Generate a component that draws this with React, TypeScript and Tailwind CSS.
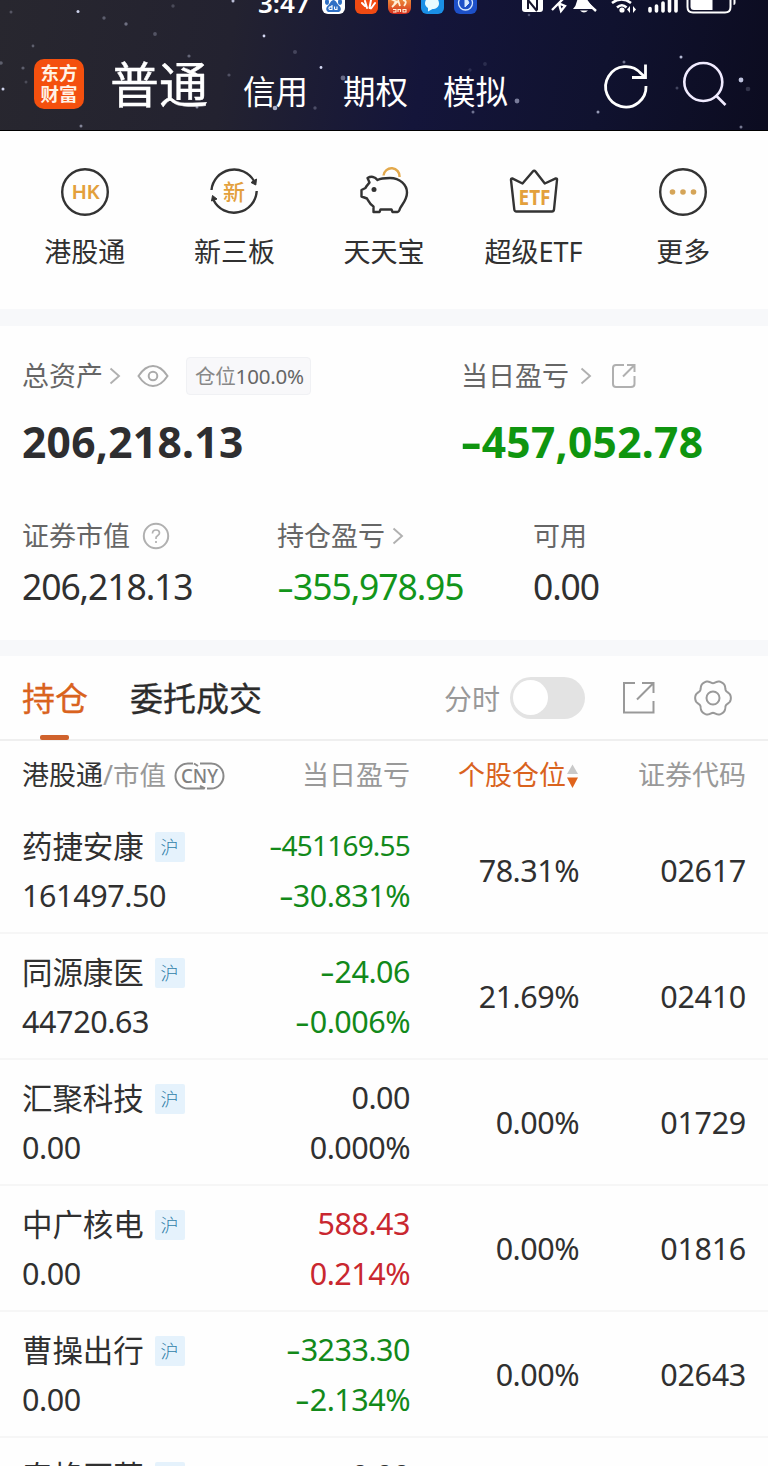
import type { ReactNode } from "react";

const FONT = "font-['Noto_Sans','Noto_Sans_CJK_SC',sans-serif]";

const STARS: [number, number, number, number][] = [
  [11, 12, 1.5, 0.25], [78, 11.5, 1.5, 0.9], [104, 18, 1.7, 0.3], [126, 24, 1.7, 0.4],
  [155, 34, 1.9, 0.25], [33, 46, 1.4, 0.3], [1, 63, 1.8, 0.3], [23, 68, 1.6, 0.3],
  [3, 89, 1.5, 0.9], [26, 82, 1.5, 0.2], [189, 56, 1.6, 0.35], [229, 75, 1.6, 0.25],
  [264, 36, 1.4, 0.95], [295, 52, 2, 0.2], [321, 67.5, 1.4, 0.95], [343, 78, 2.4, 0.4],
  [275, 108, 2.3, 0.75], [315, 108, 1.7, 0.25], [81, 126, 1.5, 0.5], [233, 1, 1.5, 0.8],
  [173, 6, 1.7, 0.2], [517, 101, 2.4, 0.5], [473, 112, 1.5, 0.45], [598, 112, 1.5, 0.65],
  [681, 57, 1.5, 0.8], [741, 80, 2.4, 0.85], [748, 89, 2.3, 0.18], [741, 127, 1.5, 0.5],
  [485, 64, 1.9, 0.12], [470, 70, 1.7, 0.12], [529, 15, 1.3, 0.3], [677, 88, 1.5, 0.25],
  [624, 62, 1.5, 0.45], [197, 107, 1.5, 0.55],
];

function Chevron() {
  return (
    <svg width="12" height="18" viewBox="0 0 12 18" fill="none" stroke="#b0b0b0" strokeWidth="1.9">
      <path d="M1.5 1.5 10 9 1.5 16.5" />
    </svg>
  );
}

function StatusBar() {
  return (
    <div className="relative flex h-[14px] items-end overflow-hidden pl-[258px]">
      <span className="-mb-[2px] h-[26px] w-[64px] text-[26px] leading-[26px] font-semibold text-white">3:47</span>
      <div className="flex gap-[10px]">
        <span className="flex h-[23px] w-[23px] items-end justify-center rounded-[6px] bg-white">
          <svg width="19" height="20" viewBox="0 0 19 20" fill="#2f6fc4">
            <ellipse cx="3" cy="8" rx="2" ry="2.8" />
            <ellipse cx="16" cy="8" rx="2" ry="2.8" />
            <path d="M9.500 6C7 6 6 10 3.500 12C1 14.500 2.500 18.500 6 18H13C17 18.500 18 14.500 15.500 12C13 10 12 6 9.500 6Z" />
            <path d="M8 11v4.500H6.200a1.300 1.300 0 0 1 0-2.600H8M10.500 12.500v2q0 1 1 1h1.500v-3" stroke="#fff" strokeWidth="1.100" fill="none" />
          </svg>
        </span>
        <span className="flex h-[23px] w-[23px] items-end justify-center rounded-[6px] bg-[#f04a12]">
          <svg width="19" height="20" viewBox="0 0 19 20" fill="none" stroke="#fff" strokeLinecap="round" strokeWidth="2">
            <path d="M8 12 5 9M10 14 8 7M12.500 14 14 6M14 14.500 18 9" />
          </svg>
        </span>
        <span className="flex h-[23px] w-[23px] flex-col items-center justify-end rounded-[6px] bg-linear-to-b from-[#f5b64a] to-[#d4281e]">
          <svg width="21" height="20" viewBox="0 0 21 20" fill="none" stroke="#fff0d8">
            <path d="M2 5 8 8 3 13M9 6 11 12M14 6q5 1 1 6M5 10l3-3" strokeWidth="1.800" />
            <path d="M4 15.500h3v2.500H4M9 18v-2.500h2.500V18M14 15.500h3v2.500h-3z" strokeWidth="1.100" />
          </svg>
        </span>
        <span className="flex h-[23px] w-[23px] items-end justify-center rounded-[6px] bg-[#1a8fe6]">
          <svg width="19" height="21" viewBox="0 0 19 21" fill="#e9fbff">
            <path d="M9 4c5 0 7 3 7 6.500S13 16 9.500 16L5 18.500V15C3 13.500 2 12 2 10.500 2 7 4 4 9 4Z" />
          </svg>
        </span>
        <span className="flex h-[23px] w-[23px] items-end justify-center rounded-[6px] bg-[#1d50c8]">
          <svg width="19" height="21" viewBox="0 0 19 21" fill="none" stroke="#d5e8ff">
            <circle cx="9.500" cy="10" r="7" strokeWidth="1.300" />
            <path d="M9 5v9l4-4-2-4z" fill="#d5e8ff" />
          </svg>
        </span>
      </div>
      <svg className="ml-[43px] shrink-0" width="220" height="14" viewBox="0 0 220 14" fill="#fff">
        <path d="M2 0h21v9q0 3-3 3H5q-3 0-3-3z" />
        <path d="M8 0v9M17 0v10M8 0l9 11" stroke="#16152c" strokeWidth="2" fill="none" />
        <path d="M32 10 44-2M38 3l7 3-4 5-2-7" stroke="#fff" strokeWidth="2.300" fill="none" />
        <path d="M57 1 58-2H66L74 9H53Q56 6 57 1ZM60 10.500h8q-4 4-8 0Z" />
        <path d="M60-4 76 11" stroke="#fff" strokeWidth="2.400" />
        <path d="M92 3q9.500-7 19 0M97 7.500q5-4.500 9.500 0" stroke="#fff" strokeWidth="2.600" fill="none" />
        <circle cx="102" cy="10" r="2.600" />
        <path d="M107 9.500 110 6v7zM116 9.500 113 6v7z" />
        <path d="M130 8.500v2.500M136.500 6v5M143 3v8M149.500 0v11M156 -2v13" stroke="#fff" strokeWidth="3.600" strokeLinecap="round" />
        <path d="M167.500-4V7q0 5.500 5.500 5.500h32q5.500 0 5.500-5.500V-4" stroke="#fff" strokeWidth="2" fill="none" />
        <path d="M170.500-1h22V10H174q-3.500 0-3.500-3.500z" />
        <path d="M213.500 0h2v3q0 2-2 2z" />
      </svg>
    </div>
  );
}

function Header() {
  return (
    <header className="relative h-[131px] overflow-hidden border-b border-black bg-[linear-gradient(100deg,#28272f_0%,#232230_30%,#14153a_55%,#10122f_78%,#0c0c20_100%)]">
      <svg className="absolute inset-0" width="768" height="131" viewBox="0 0 768 131" fill="#dfe4ff">
        {STARS.map(([x, y, r, o]) => (
          <circle key={x + "-" + y} cx={x} cy={y} r={r} opacity={o} />
        ))}
      </svg>
      <StatusBar />
      <div className="relative flex h-[117px] pl-[34px] text-white">
        <div className="mt-[45px] flex h-[50px] w-[50px] flex-col items-center justify-center rounded-[10px] bg-[#f4500e] pb-[1px] text-[18.500px] leading-[20.500px] font-bold text-[#fff3e6]">
          <span>东方</span>
          <span>财富</span>
        </div>
        <span className="mt-[40px] ml-[26px] w-[133px] text-[49px] leading-[60px] [-webkit-text-stroke:0.400px]">普通</span>
        <span className="mt-[58px] w-[100px] text-[32.500px] leading-[40px]">信用</span>
        <span className="mt-[58px] w-[100px] text-[32.500px] leading-[40px]">期权</span>
        <span className="mt-[58px] w-[100px] text-[32.500px] leading-[40px]">模拟</span>
        <svg className="mt-[46px] ml-[58px]" width="50" height="52" viewBox="601 60 50 52" fill="none" stroke="#fff" strokeWidth="2.800">
          <path d="M646 86A20.200 20.200 0 1 1 641 73.500L645 77" />
          <path d="M645.500 64.500V77.500H632" />
        </svg>
        <svg className="mt-[46px] ml-[30px]" width="50" height="52" viewBox="681 60 50 52" fill="none" stroke="#f0ebff" strokeWidth="2.600">
          <circle cx="703.300" cy="82" r="19" />
          <path d="M716.500 96 725.500 105" />
        </svg>
      </div>
    </header>
  );
}

function Shortcut({ label, children }: { label: string; children: ReactNode }) {
  return (
    <div className="flex flex-col items-center">
      <svg width="50" height="50" viewBox="0 0 50 50" fill="none" stroke="#333" strokeWidth="2.400" strokeLinejoin="round">
        {children}
      </svg>
      <span className="mt-[16px] text-[27px] leading-[38px] whitespace-nowrap text-[#303030]">{label}</span>
    </div>
  );
}

function Shortcuts() {
  return (
    <section className="grid h-[178px] grid-cols-5 px-[10px] pt-[36px]">
      <Shortcut label="港股通">
        <circle cx="25" cy="25" r="22.800" />
        <text x="25.300" y="32.300" textAnchor="middle" fill="#e3a03c" stroke="none" fontSize="20.500" fontWeight="600" letterSpacing="-0.5">HK</text>
      </Shortcut>
      <Shortcut label="新三板">
        <path d="M2.500 23A22.800 22.800 0 0 1 45 14" />
        <path d="M47.700 24A22.800 22.800 0 0 1 4.500 33" />
        <path d="M42 15.500 47.500 12 46.800 18ZM2.500 34 3.500 28.500 8 32Z" fill="#333" strokeWidth="1" />
        <text x="25" y="33" textAnchor="middle" fill="#e3a03c" stroke="none" fontSize="22" fontWeight="500">新</text>
      </Shortcut>
      <Shortcut label="天天宝">
        <path d="M24.500 8.500A8 8 0 0 1 40.500 10" stroke="#e3a94c" />
        <path d="M8.500 11C12 9 16 9.500 18.500 13C22 11 26 11 31 11C41 11 48 18 48 25.500C48 33 43 37.500 41 41.500Q40 45 38.500 45H33.500L32.500 42.500H21.500L20.500 45H14.500V39.500C11 37.500 9.500 34 8 31.500L2.500 29.500V23L6.500 21C7.500 18.500 9.500 17 10.500 15.500Z" />
        <circle cx="15" cy="22.500" r="2.500" fill="#333" stroke="none" />
      </Shortcut>
      <Shortcut label="超级ETF">
        <path d="M3.200 11.400 13.500 16.500 23.800 4.500Q25.200 2.900 26.500 4.500L35.800 16.500 46.800 11.400Q48.300 11.300 48 13L45 42.500Q44.700 44.500 43 44.500H7.500Q5.500 44.500 5.300 42.500L2 13Q1.800 11.400 3.200 11.400Z" />
        <text x="25.500" y="37.500" textAnchor="middle" fill="#e3a03c" stroke="none" fontSize="22" fontWeight="700" textLength="32" lengthAdjust="spacingAndGlyphs">ETF</text>
      </Shortcut>
      <Shortcut label="更多">
        <circle cx="25" cy="25" r="22.800" />
        <g fill="#d5a558" stroke="none">
          <circle cx="14.500" cy="25" r="2.800" />
          <circle cx="25" cy="25" r="2.800" />
          <circle cx="35.500" cy="25" r="2.800" />
        </g>
      </Shortcut>
    </section>
  );
}

function Num({ value }: { value: string }) {
  const negative = value.startsWith("-");
  return (
    <span className="whitespace-nowrap">
      {negative && <span className="mr-[0.16em] inline-block origin-left scale-x-150">-</span>}
      {negative ? value.slice(1) : value}
    </span>
  );
}

function Assets() {
  return (
    <section className="h-[314px] px-[22px] pt-[30px] text-[27px] text-[#666]">
      <div className="flex h-[40px] items-center">
        <div className="flex w-[439px] items-center">
          <span>总资产</span>
          <span className="ml-[6px]"><Chevron /></span>
          <svg className="ml-[16px]" width="32" height="24" viewBox="0 0 32 24" fill="none" stroke="#aaa" strokeWidth="2">
            <path d="M1.500 12Q8 2 16 2T30.500 12Q24 22 16 22T1.500 12Z" />
            <circle cx="16" cy="12" r="4.300" />
          </svg>
          <span className="ml-[17px] flex h-[38px] w-[125px] items-center rounded-[4px] border border-[#f0f1f4] bg-[#f8f8fa] pl-[8px] text-[20.500px] tracking-[-0.200px] whitespace-nowrap">
            <span className="text-[#888]">仓位</span>100.0%
          </span>
        </div>
        <span>当日盈亏</span>
        <span className="ml-[11px]"><Chevron /></span>
        <svg className="ml-[19px]" width="26" height="26" viewBox="0 0 26 26" fill="none" stroke="#b0b0b0" strokeWidth="2">
          <path d="M13 2H5Q2 2 2 5V21Q2 24 5 24H20Q23.500 24 23.500 21V13M12 13.500 23 2.500M16 2H23.500V9" />
        </svg>
      </div>
      <div className="mt-[14px] flex h-[64px] items-center text-[42.500px] font-bold tracking-[0.300px] text-[#2e2e30]">
        <span className="w-[439px]"><Num value="206,218.13" /></span>
        <span className="text-[#0f950f]"><Num value="-457,052.78" /></span>
      </div>
      <div className="mt-[42px] grid grid-cols-[255px_256px_1fr]">
        <div className="flex h-[40px] items-center">
          证券市值
          <svg className="ml-[12px]" width="28" height="28" viewBox="0 0 28 28" fill="none" stroke="#b0b0b0" strokeWidth="2">
            <circle cx="14" cy="14" r="12.200" />
            <path d="M10.500 11.500Q10.500 8 14 8T17.500 11Q17.500 12.500 15.500 13.800T14 16.500V17M14 19V21" strokeWidth="1.700" />
          </svg>
        </div>
        <div className="flex h-[40px] items-center gap-[7px]">持仓盈亏<Chevron /></div>
        <div className="flex h-[40px] items-center">可用</div>
      </div>
      <div className="mt-[1px] grid h-[60px] grid-cols-[255px_256px_1fr] items-center text-[35.500px] tracking-[-1.100px] text-[#303030]">
        <Num value="206,218.13" />
        <span className="text-[#12951a]"><Num value="-355,978.95" /></span>
        <Num value="0.00" />
      </div>
    </section>
  );
}

function gearPath() {
  const pts: string[] = [];
  for (let i = 0; i < 120; i++) {
    const a = (i / 120) * Math.PI * 2;
    const r = 16.6 + 1.5 * Math.cos(6 * a) - 0.25 * Math.cos(12 * a);
    pts.push((20 + r * Math.cos(a)).toFixed(2) + " " + (20 + r * Math.sin(a)).toFixed(2));
  }
  return "M" + pts.join("L") + "Z";
}

function Tabs() {
  return (
    <nav className="relative flex h-[85px] items-center border-b-2 border-[#efefef] pl-[22px] text-[33px]">
      <span className="w-[108px] pt-[2px] text-[#d9631e] [-webkit-text-stroke:0.300px]">持仓</span>
      <span className="w-[314px] pt-[2px] text-[#2c2c2c] [-webkit-text-stroke:0.300px]">委托成交</span>
      <span className="w-[66px] pt-[2px] text-[28px] text-[#999]">分时</span>
      <span className="flex h-[42px] w-[75px] items-center rounded-full bg-[#e3e3e3] px-[3px]">
        <span className="h-[35px] w-[35px] rounded-full bg-white" />
      </span>
      <svg className="ml-[37px]" width="34" height="34" viewBox="0 0 34 34" fill="none" stroke="#999" strokeWidth="2">
        <path d="M13 2H2V31.500H31.500V20M20 2H31.500V12M15 18.500 31 2.500" />
      </svg>
      <svg className="ml-[37px]" width="40" height="40" viewBox="0 0 40 40" fill="none" stroke="#999" strokeWidth="2">
        <path d={gearPath()} />
        <circle cx="20" cy="20" r="6.500" />
      </svg>
      <span className="absolute bottom-[-1px] left-[40px] h-[5px] w-[29px] rounded-[2px] bg-[#d0622c]" />
    </nav>
  );
}

const COLS = "grid grid-cols-[200px_188px_169px_167px] pl-[22px]";

function TableHead() {
  return (
    <div className={COLS + " h-[67px] items-center pt-[2px] text-[27px] text-[#999]"}>
      <div className="flex items-center whitespace-nowrap">
        <span className="text-[#333]">港股通</span>
        <span>/</span>
        <span className="text-[26.500px]">市值</span>
        <svg className="ml-[8px] shrink-0" width="51" height="28" viewBox="0 0 51 28" fill="none" stroke="#8a8a8a" strokeWidth="2">
          <path d="M19 1.500H14A12.500 12.500 0 0 0 14 26.500H30M20 1.500l4 2.500M26 1.500H37A12.500 12.500 0 0 1 37 26.500H33M26 24l5 2.500" />
          <text x="25.500" y="20.800" textAnchor="middle" fill="#808080" stroke="none" fontSize="19" fontWeight="500" textLength="37" lengthAdjust="spacingAndGlyphs">CNY</text>
        </svg>
      </div>
      <span className="text-right">当日盈亏</span>
      <span className="flex items-center justify-end whitespace-nowrap text-[#d9631e]">
        个股仓位
        <svg width="13" height="26" viewBox="0 0 13 26">
          <path d="M1 11 6.500 1.500 12 11Z" fill="#c9c9c9" />
          <path d="M1 14.500H12L6.500 25Z" fill="#e0641c" />
        </svg>
      </span>
      <span className="text-right">证券代码</span>
    </div>
  );
}

const HOLDINGS = [
  { name: "药捷安康", value: "161497.50", pnl: "-451169.55", rate: "-30.831%", share: "78.31%", code: "02617" },
  { name: "同源康医", value: "44720.63", pnl: "-24.06", rate: "-0.006%", share: "21.69%", code: "02410" },
  { name: "汇聚科技", value: "0.00", pnl: "0.00", rate: "0.000%", share: "0.00%", code: "01729" },
  { name: "中广核电", value: "0.00", pnl: "588.43", rate: "0.214%", share: "0.00%", code: "01816" },
  { name: "曹操出行", value: "0.00", pnl: "-3233.30", rate: "-2.134%", share: "0.00%", code: "02643" },
  { name: "泰格医药", value: "0.00", pnl: "0.00", rate: "0.000%", share: "0.00%", code: "03347" },
];

function tone(pnl: string) {
  if (pnl.startsWith("-")) return "text-[#12891a]";
  return Number(pnl) > 0 ? "text-[#c9272f]" : "text-[#303030]";
}

function HoldingRow({ row }: { row: (typeof HOLDINGS)[number] }) {
  const pnlSize = row.pnl.length > 9 ? "text-[28px] tracking-[-0.800px]" : "";
  return (
    <div className={COLS + " h-[126px] shrink-0 items-center border-b-2 border-[#f6f6f6] pt-[1px] text-[30.500px] leading-[48px] tracking-[-0.500px] text-[#303030]"}>
      <div>
        <div className="flex h-[50px] items-center">
          <span className="tracking-[-0.100px]">{row.name}</span>
          <span className="mt-[2px] ml-[11px] flex h-[30px] w-[30px] items-center justify-center rounded-[2px] bg-[#e5f2fc] text-[18px] font-light tracking-normal text-[#2f7ea8]">沪</span>
        </div>
        <div className="h-[50px] tracking-[-0.400px]"><Num value={row.value} /></div>
      </div>
      <div className={"text-right " + tone(row.pnl)}>
        <div className={"h-[50px] " + pnlSize}><Num value={row.pnl} /></div>
        <div className="h-[50px]"><Num value={row.rate} /></div>
      </div>
      <span className="pb-[2px] text-right">{row.share}</span>
      <span className="pb-[2px] text-right tracking-[-0.300px]">{row.code}</span>
    </div>
  );
}

export default function App() {
  return (
    <main className={"flex h-[1466px] w-[768px] flex-col overflow-hidden bg-[#fefefe] " + FONT}>
      <Header />
      <Shortcuts />
      <div className="h-[17px] bg-[#f7f8fa]" />
      <Assets />
      <div className="h-[16px] bg-[#f7f8fa]" />
      <Tabs />
      <TableHead />
      <div className="flex h-[658px] flex-col overflow-hidden">
        {HOLDINGS.map((row) => (
          <HoldingRow key={row.code} row={row} />
        ))}
      </div>
    </main>
  );
}
